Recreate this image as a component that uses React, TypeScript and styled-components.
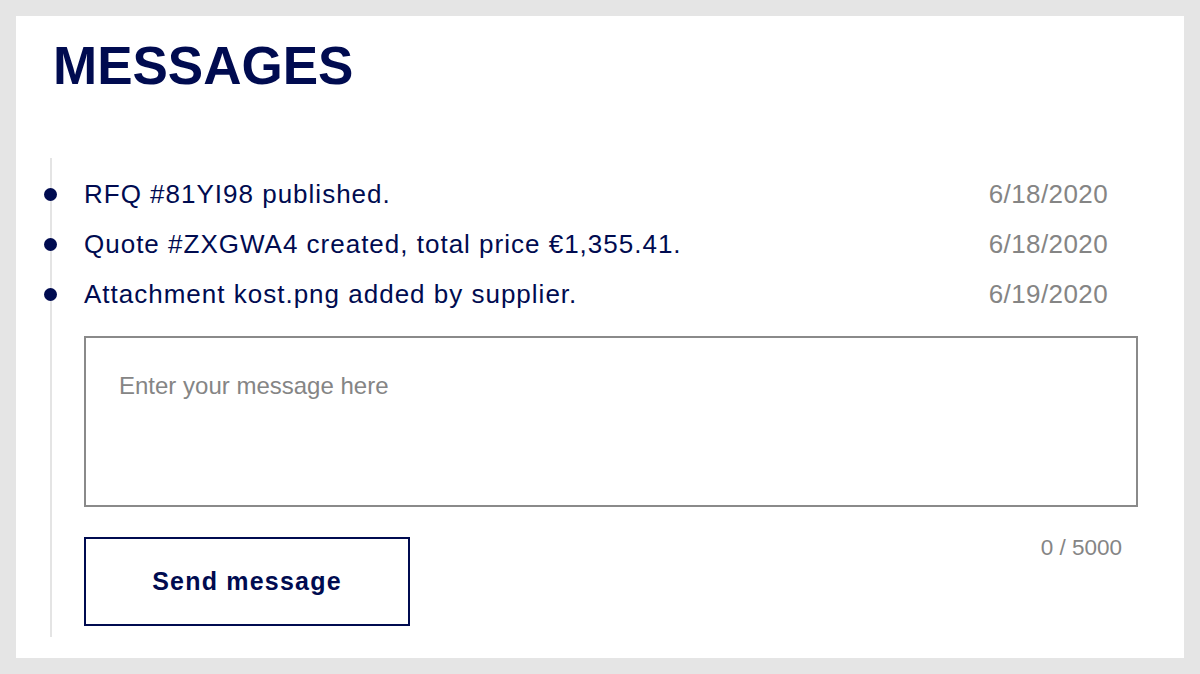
import styled, { createGlobalStyle } from "styled-components";

const NAVY = "#000b50";
const GREY = "#858585";

const GlobalStyle = createGlobalStyle`
    html, body {
        margin: 0;
        padding: 0;
        background: #e5e5e5;
    }

    body {
        padding: 16px;
        font-family: "Liberation Sans", Arial, Helvetica, sans-serif;
    }

    * {
        box-sizing: border-box;
    }
`;

interface EventModel {
    id: string;
    message: string;
    date: string;
}

const events: EventModel[] = [
    { id: "1", message: "RFQ #81YI98 published.", date: "6/18/2020" },
    { id: "2", message: "Quote #ZXGWA4 created, total price €1,355.41.", date: "6/18/2020" },
    { id: "3", message: "Attachment kost.png added by supplier.", date: "6/19/2020" },
];

const Card = styled.section`
    background: #fff;
    height: 642px;
    padding: 20px 46px 0 34px;
`;

const Title = styled.h1`
    margin: 0 0 0 3px;
    font-size: 53px;
    line-height: 60px;
    font-weight: 700;
    color: ${NAVY};
`;

const Timeline = styled.div`
    margin-top: 62px;
    border-left: 2px solid #e4e4e4;
    padding: 11px 0 11px 32px;
`;

const Row = styled.div`
    position: relative;
    display: flex;
    justify-content: space-between;
    align-items: center;
    height: 50px;
    padding-right: 30px;
    font-size: 26px;

    &::before {
        content: "";
        position: absolute;
        left: -40px;
        top: 50%;
        width: 13px;
        height: 13px;
        margin-top: -6.5px;
        border-radius: 50%;
        background: ${NAVY};
    }
`;

const Message = styled.span`
    color: ${NAVY};
    letter-spacing: 1px;
`;

const EventDate = styled.span`
    color: ${GREY};
    letter-spacing: 0.4px;
`;

const MessageInput = styled.textarea`
    display: block;
    width: 100%;
    height: 171px;
    margin-top: 17px;
    padding: 34px 33px;
    border: 2px solid #8a8a8a;
    border-radius: 0;
    resize: none;
    outline: none;
    font-family: inherit;
    font-size: 24px;
    line-height: 27.6px;
    color: ${NAVY};

    &::placeholder {
        color: ${GREY};
    }
`;

const Footer = styled.div`
    display: flex;
    justify-content: space-between;
    align-items: flex-start;
    margin-top: 30px;
`;

const SendButton = styled.button`
    width: 326px;
    height: 89px;
    background: #fff;
    border: 2px solid ${NAVY};
    border-radius: 0;
    font-family: inherit;
    font-size: 25px;
    font-weight: 700;
    letter-spacing: 1.2px;
    color: ${NAVY};
    cursor: pointer;
`;

const Counter = styled.span`
    margin-right: 16px;
    font-size: 22.5px;
    line-height: 22px;
    color: ${GREY};
`;

export default function App() {
    return (
        <>
            <GlobalStyle />
            <Card>
                <Title>MESSAGES</Title>
                <Timeline>
                    {events.map((event) => (
                        <Row key={event.id}>
                            <Message>{event.message}</Message>
                            <EventDate>{event.date}</EventDate>
                        </Row>
                    ))}
                    <MessageInput placeholder="Enter your message here" maxLength={5000} />
                    <Footer>
                        <SendButton>Send message</SendButton>
                        <Counter>0 / 5000</Counter>
                    </Footer>
                </Timeline>
            </Card>
        </>
    );
}
